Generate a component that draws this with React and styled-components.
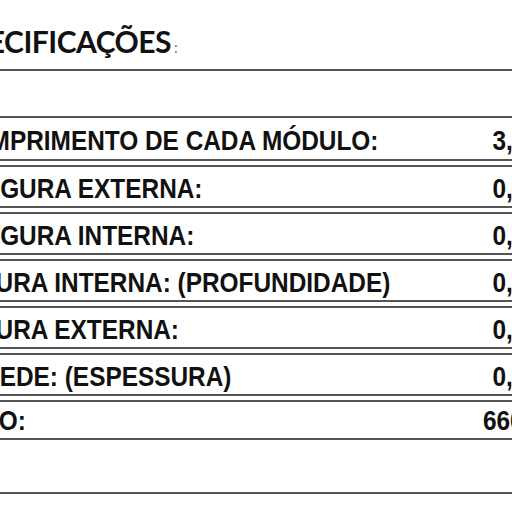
import React from 'react'
import styled, { createGlobalStyle } from 'styled-components'

const specs = [
  { label: 'COMPRIMENTO DE CADA MÓDULO:', value: '3,00 M', indent: 3 },
  { label: 'LARGURA EXTERNA:', value: '0,60 M' },
  { label: 'LARGURA INTERNA:', value: '0,50 M' },
  { label: 'ALTURA INTERNA: (PROFUNDIDADE)', value: '0,50 M' },
  { label: 'ALTURA EXTERNA:', value: '0,60 M' },
  { label: 'PAREDE: (ESPESSURA)', value: '0,05 M' },
  { label: 'PESO:', value: '660 KG' },
]

const GlobalStyle = createGlobalStyle`
  html, body {
    margin: 0;
    padding: 0;
    background: #fff;
    overflow: hidden;
  }
`

const App = () => {
  return (
    <Page>
      <GlobalStyle />
      <Sheet>
        <Heading>
          <HeadingText>
            ESPECIFICAÇÕES<HeadingColon>:</HeadingColon>
          </HeadingText>
        </Heading>
        <BlankRow />
        {specs.map((item, i) => (
          <Row
            key={item.label}
            $first={i === 0}
            $last={i === specs.length - 1}
          >
            <Label $indent={item.indent || 0}>{item.label}</Label>
            <Value>{item.value}</Value>
          </Row>
        ))}
        <TailRow />
      </Sheet>
    </Page>
  )
}

const Page = styled.div`
  width: 512px;
  height: 512px;
  overflow: hidden;
  background: #fff;
`

const Sheet = styled.div`
  display: flex;
  flex-direction: column;
  width: 625px;
  margin-left: -50px;
`

const Heading = styled.div`
  display: flex;
  align-items: flex-end;
  height: 69px;
  border-bottom: 2px solid #555;
`

const HeadingText = styled.h2`
  margin: 0 0 13px -13px;
  font-family: Lato, 'Open Sans', sans-serif;
  font-weight: 700;
  font-size: 30px;
  letter-spacing: -0.5px;
  line-height: 1;
  color: #111;
`

const HeadingColon = styled.span`
  margin-left: 3px;
  font-weight: 400;
  font-size: 15px;
  color: #777;
`

const BlankRow = styled.div`
  height: 45px;
  border-bottom: 2px solid #555;
`

const Row = styled.div`
  display: flex;
  align-items: center;
  justify-content: space-between;
  box-sizing: border-box;
  height: ${p => (p.$last ? '40px' : '43px')};
  margin-top: ${p => (p.$first ? '0' : '4px')};
  padding: ${p => (p.$last ? '3px' : '6px')} 8px 0 0;
  border-top: ${p => (p.$first ? 'none' : '2px solid #555')};
  border-bottom: 2px solid #555;
  font-family: 'Liberation Sans', Arial, sans-serif;
  font-weight: 700;
  font-size: 24.4px;
  line-height: 1;
  color: #111;
`

const Cell = styled.span`
  display: inline-block;
  white-space: nowrap;
  transform: scaleY(1.12);
`

const Label = styled(Cell)`
  margin-left: ${p => p.$indent}px;
  transform-origin: left center;
`

const Value = styled(Cell)`
  transform-origin: right center;
`

const TailRow = styled.div`
  height: 52px;
  border-bottom: 2px solid #555;
`

export default App
